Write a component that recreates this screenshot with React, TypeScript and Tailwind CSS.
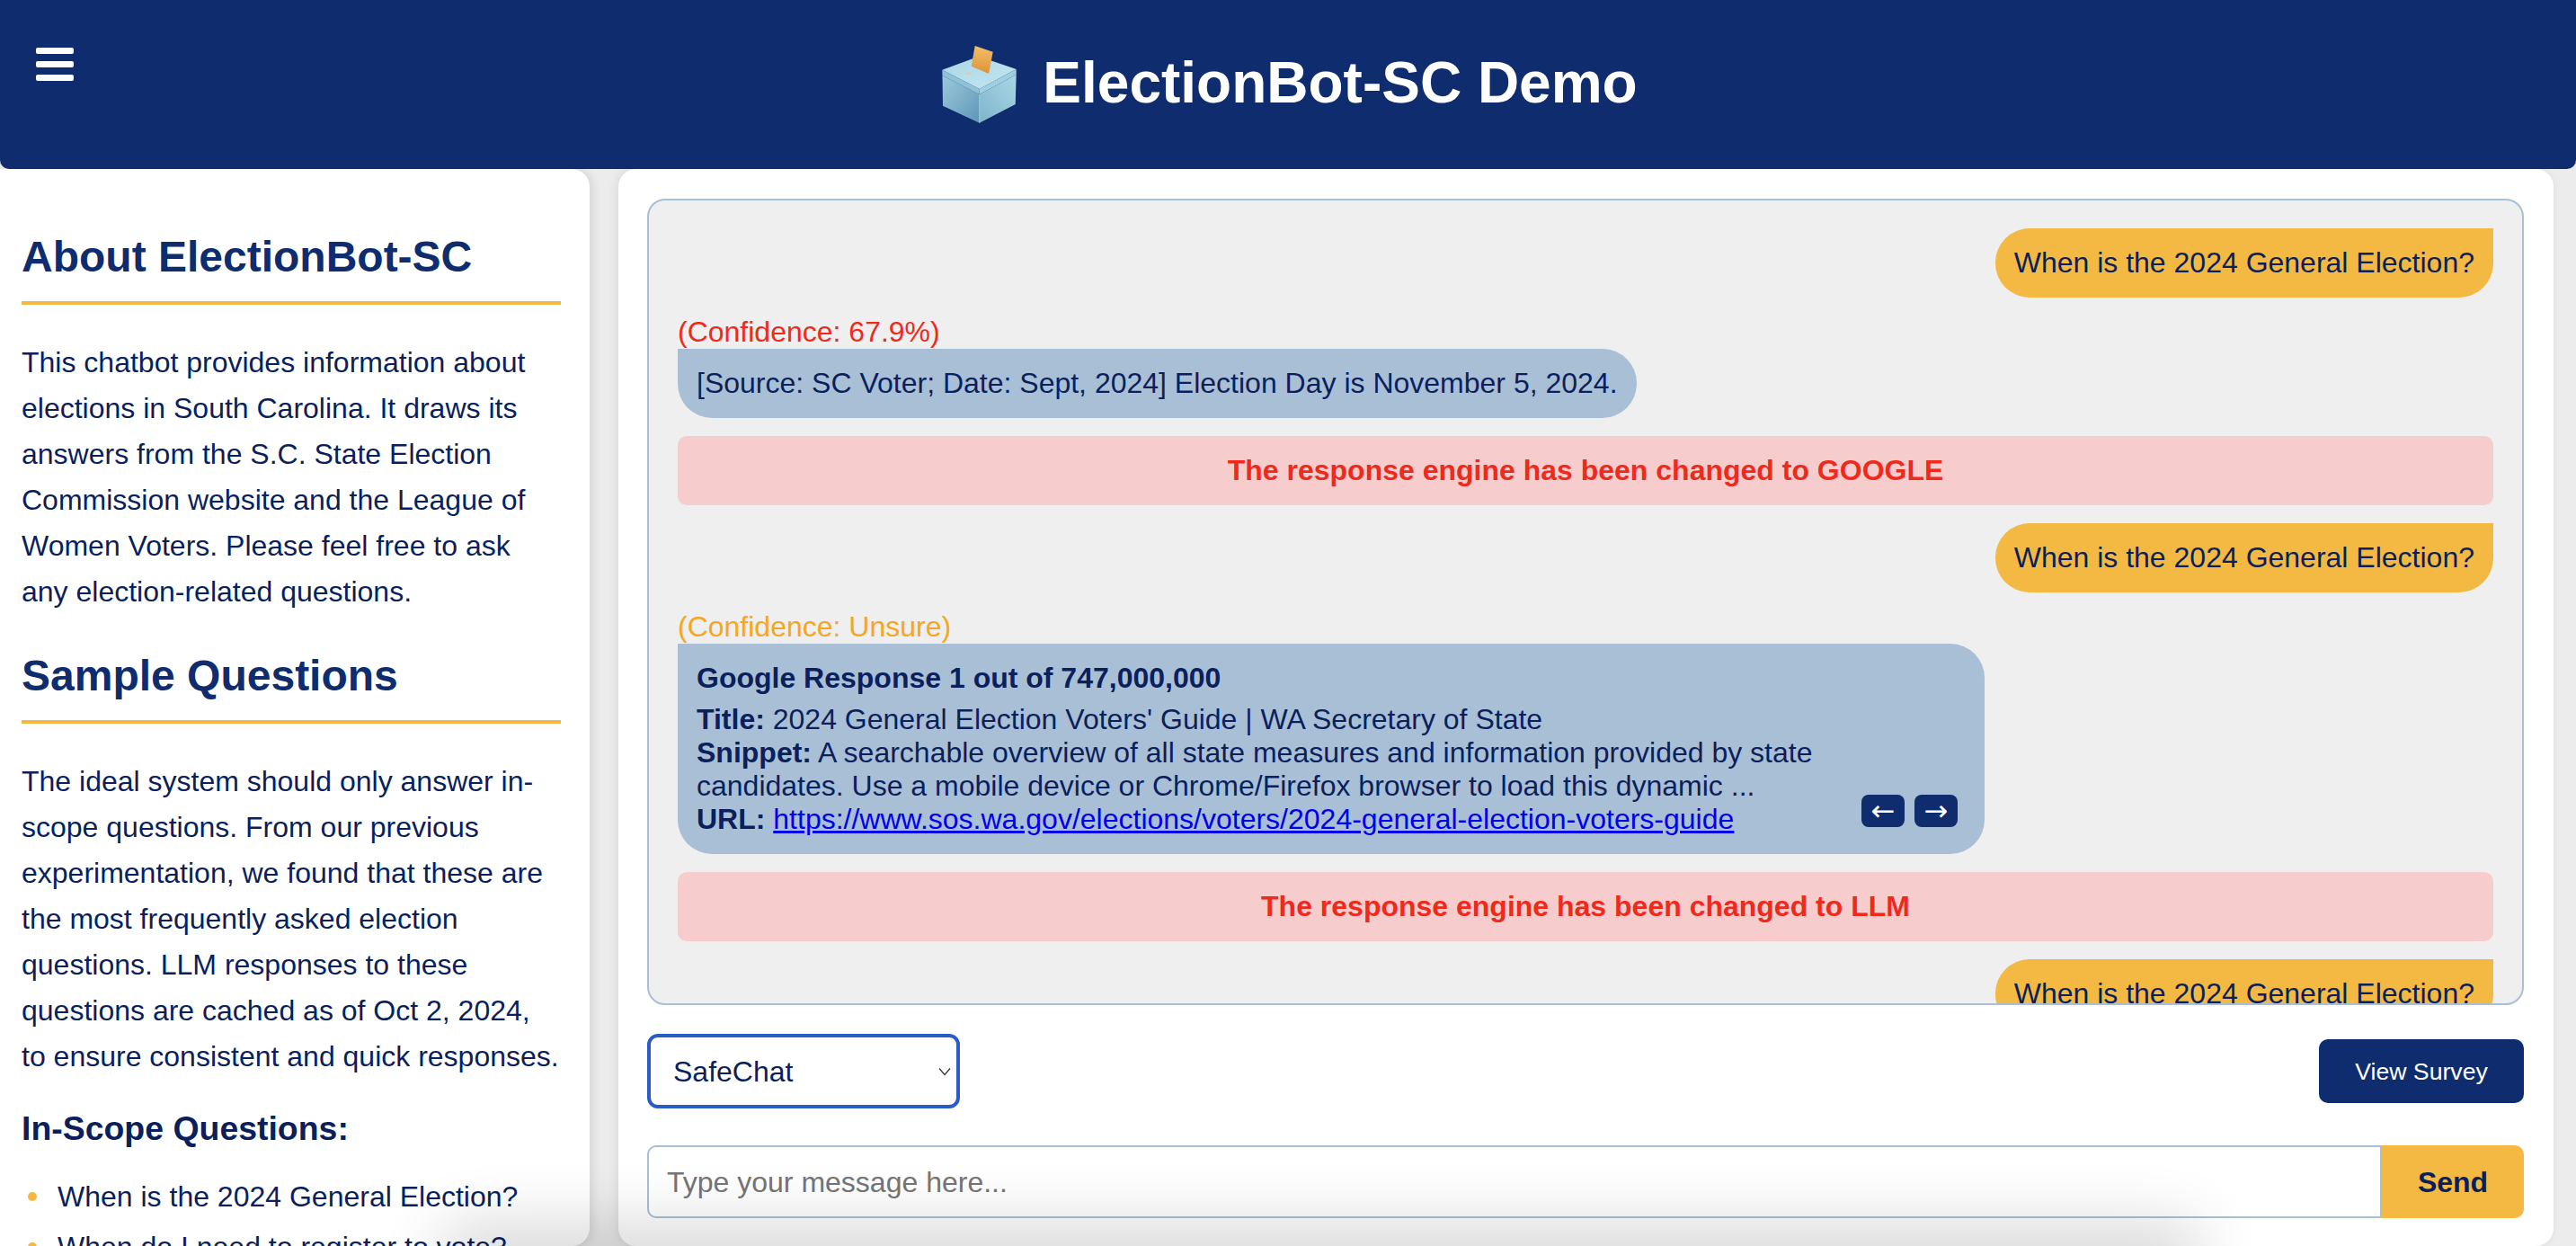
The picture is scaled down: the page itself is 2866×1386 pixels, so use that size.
import React from "react";

function BallotIcon() {
  return (
    <svg viewBox="45 28 90 90" className="w-[90px] h-[90px] shrink-0 mr-[26px]">
      <defs>
        <linearGradient id="lid" x1="0" y1="0" x2="1" y2="1">
          <stop offset="0" stopColor="#a9d6e6" />
          <stop offset="1" stopColor="#c4e6f0" />
        </linearGradient>
        <linearGradient id="left" x1="0" y1="0" x2="1" y2="1">
          <stop offset="0" stopColor="#9cc9dc" />
          <stop offset="1" stopColor="#5f97b8" />
        </linearGradient>
        <linearGradient id="right" x1="0" y1="1" x2="1" y2="0">
          <stop offset="0" stopColor="#7fb4cc" />
          <stop offset="1" stopColor="#a9d8e6" />
        </linearGradient>
        <linearGradient id="paper" x1="0" y1="0" x2="0" y2="1">
          <stop offset="0" stopColor="#f5bd6b" />
          <stop offset="1" stopColor="#dc9437" />
        </linearGradient>
      </defs>
      <polygon points="49.5,63 90.7,84 90.7,115.7 50,96.7" fill="url(#left)" />
      <polygon points="90.7,84 131.7,62 130.7,95 90.7,115.7" fill="url(#right)" />
      <polygon points="49.3,56.7 90,41.7 131.7,56 90.7,78" fill="url(#lid)" />
      <polygon points="49.3,56.7 90.7,78 90.7,84 49.5,63" fill="#8fc2d6" />
      <polygon points="90.7,78 131.7,56 131.7,62 90.7,84" fill="#9fd0e0" />
      <polygon points="85.7,30 105.7,36.7 101,61 81.7,52.7" fill="url(#paper)" />
      <line x1="90.7" y1="84" x2="90.7" y2="115.7" stroke="#bfe2ee" strokeWidth="0.7" />
      <ellipse cx="78.5" cy="60.7" rx="3.2" ry="1.4" fill="#d9c9c0" />
    </svg>
  );
}

function UserBubble({ children }: { children: React.ReactNode }) {
  return (
    <div className="self-end shrink-0 bg-[#f4b942] text-[#0a1f5c] rounded-l-[38px] rounded-br-[38px] px-[21px] py-[20px] leading-[37px]">
      {children}
    </div>
  );
}

function Notice({ children }: { children: React.ReactNode }) {
  return (
    <div className="shrink-0 bg-[#f6cccc] text-[#ee2a1c] font-bold text-center rounded-[10px] py-[20px] leading-[37px]">
      {children}
    </div>
  );
}

function Heading({ children, className }: { children: React.ReactNode; className: string }) {
  return (
    <h2 className={"text-[48px] leading-[56px] font-bold text-[#0f2d6e] border-b-[4px] border-[#f4b942] pb-[21px] " + className}>
      {children}
    </h2>
  );
}

export default function App() {
  return (
    <div className="relative h-[1386px] overflow-hidden flex flex-col bg-[#ececec] font-['Liberation_Sans',Arial,sans-serif] text-[#0a1f5c]">
      <header className="relative z-10 h-[188px] shrink-0 bg-[#0f2d6e] rounded-b-[10px] flex items-center justify-center">
        <div className="absolute left-[40px] top-[53px] w-[42px] flex flex-col gap-[8px]">
          <span className="block h-[7px] bg-white rounded-[2px]" />
          <span className="block h-[7px] bg-white rounded-[2px]" />
          <span className="block h-[7px] bg-white rounded-[2px]" />
        </div>
        <BallotIcon />
        <h1 className="text-[64px] leading-[75px] font-bold text-white mb-[4px]">ElectionBot-SC Demo</h1>
      </header>

      <div className="flex-1 min-h-0 flex">
        <aside className="w-[656px] shrink-0 bg-white rounded-r-[20px] overflow-hidden pl-[24px] pr-[32px] pt-[70px] shadow-[2px_0_12px_rgba(0,0,0,0.12)]">
          <Heading className="">About ElectionBot-SC</Heading>
          <p className="mt-[39px] text-[32px] leading-[51px]">
            This chatbot provides information about elections in South Carolina. It draws its answers from the S.C. State Election Commission website and the League of Women Voters. Please feel free to ask any election-related questions.
          </p>
          <Heading className="mt-[40px]">Sample Questions</Heading>
          <p className="mt-[39px] text-[32px] leading-[51px]">
            The ideal system should only answer in-scope questions. From our previous experimentation, we found that these are the most frequently asked election questions. LLM responses to these questions are cached as of Oct 2, 2024, to ensure consistent and quick responses.
          </p>
          <h3 className="mt-[32px] text-[37.44px] leading-[44px] font-bold">In-Scope Questions:</h3>
          <ul className="mt-[28px] text-[32px] leading-[52px] flex flex-col gap-[4px]">
            <li className="flex items-center">
              <span className="w-[10px] h-[10px] rounded-full bg-[#f4b942] ml-[7px] mr-[23px] shrink-0" />
              When is the 2024 General Election?
            </li>
            <li className="flex items-center">
              <span className="w-[10px] h-[10px] rounded-full bg-[#f4b942] ml-[7px] mr-[23px] shrink-0" />
              When do I need to register to vote?
            </li>
          </ul>
        </aside>

        <main className="ml-[32px] w-[2153px] shrink-0 bg-white rounded-[20px] pt-[33px] pl-[32px] pr-[33px] shadow-[-2px_0_12px_rgba(0,0,0,0.08)]">
          <div className="h-[897px] overflow-hidden bg-[#efefef] border-2 border-[#a9bfd6] rounded-[20px] px-[32px] pt-[31px] text-[32px] flex flex-col gap-[20px]">
            <UserBubble>When is the 2024 General Election?</UserBubble>
            <div className="shrink-0 flex flex-col items-start">
              <div className="text-[#ee2a1c] leading-[37px]">(Confidence: 67.9%)</div>
              <div className="bg-[#a9bfd6] rounded-tr-[38px] rounded-b-[38px] px-[21px] py-[20px] leading-[37px]">
                [Source: SC Voter; Date: Sept, 2024] Election Day is November 5, 2024.
              </div>
            </div>
            <Notice>The response engine has been changed to GOOGLE</Notice>
            <UserBubble>When is the 2024 General Election?</UserBubble>
            <div className="shrink-0 flex flex-col items-start">
              <div className="text-[#f5a623] leading-[37px]">(Confidence: Unsure)</div>
              <div className="relative w-[1454px] bg-[#a9bfd6] rounded-tr-[38px] rounded-b-[38px] px-[21px] py-[20px] leading-[37px]">
                <div className="font-bold mb-[9px]">Google Response 1 out of 747,000,000</div>
                <div><b>Title:</b> 2024 General Election Voters' Guide | WA Secretary of State</div>
                <div className="max-w-[1300px]"><b>Snippet:</b> A searchable overview of all state measures and information provided by state candidates. Use a mobile device or Chrome/Firefox browser to load this dynamic ...</div>
                <div><b>URL:</b> <a href="#" className="text-[#0000ee] underline">https://www.sos.wa.gov/elections/voters/2024-general-election-voters-guide</a></div>
                <div className="absolute right-[30px] bottom-[30px] flex gap-[11px]">
                  <button className="w-[48px] h-[36px] bg-[#0f2d6e] text-white rounded-[8px] text-[32px] leading-[30px] font-['DejaVu_Sans',sans-serif]">←</button>
                  <button className="w-[48px] h-[36px] bg-[#0f2d6e] text-white rounded-[8px] text-[32px] leading-[30px] font-['DejaVu_Sans',sans-serif]">→</button>
                </div>
              </div>
            </div>
            <Notice>The response engine has been changed to LLM</Notice>
            <UserBubble>When is the 2024 General Election?</UserBubble>
          </div>

          <div className="mt-[32px] h-[83px] flex items-center justify-between">
            <div className="relative w-[348px] h-[83px]">
              <select className="appearance-none w-full h-full bg-white border-[4px] border-[#2a5bc7] rounded-[12px] pl-[25px] text-[32px] text-[#0a1f5c]">
                <option>SafeChat</option>
              </select>
              <svg viewBox="0 0 14 10" className="absolute right-[10px] top-[37px] w-[14px] h-[10px] pointer-events-none" fill="none" stroke="#333" strokeWidth="1.2">
                <path d="M1 1.5 L7 8.5 L13 1.5" />
              </svg>
            </div>
            <button className="w-[228px] h-[71px] bg-[#0f2d6e] text-white rounded-[10px] text-[26.67px]">View Survey</button>
          </div>

          <div className="mt-[41px] h-[81px] flex">
            <input
              placeholder="Type your message here..."
              className="flex-1 min-w-0 border-2 border-[#a9bfd6] rounded-l-[10px] px-[20px] text-[32px] bg-white outline-none placeholder:text-[#757575]"
            />
            <button className="w-[158px] bg-[#f4b942] text-[#0a1f5c] font-bold text-[32px] rounded-r-[10px]">Send</button>
          </div>
        </main>
      </div>

      <div className="absolute left-[520px] w-[1900px] top-[1392px] h-[20px] rounded-full pointer-events-none shadow-[0_0_70px_30px_rgba(0,0,0,0.16)]" />
    </div>
  );
}
